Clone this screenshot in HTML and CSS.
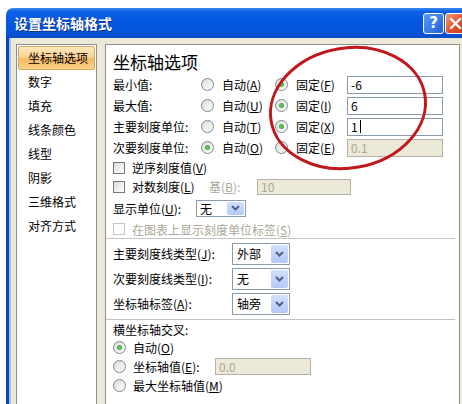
FILE: index.html
```html
<!DOCTYPE html>
<html lang="zh-CN">
<head>
    <meta charset="UTF-8">
    <meta name="viewport" content="width=device-width, initial-scale=1.0">
    <title>设置坐标轴格式</title>
    <link rel="stylesheet" href="styles.css">
</head>
<body>
    <div class="window">
        <div class="titlebar">
            <span class="title">设置坐标轴格式</span>
            <span class="tb-btn help">?</span>
            <span class="tb-btn close">
                <svg width="13" height="13" viewBox="0 0 13 13"><path d="M2 2 L11 11 M11 2 L2 11" stroke="#fff" stroke-width="2.4" stroke-linecap="round"/></svg>
            </span>
        </div>

        <div class="frame">
            <!-- category list on the left -->
            <ul class="nav">
                <li class="active">坐标轴选项</li>
                <li>数字</li>
                <li>填充</li>
                <li>线条颜色</li>
                <li>线型</li>
                <li>阴影</li>
                <li>三维格式</li>
                <li>对齐方式</li>
            </ul>

            <div class="panel">
                <h2>坐标轴选项</h2>

                <div class="bounds">
                    <span>最小值:</span>
                    <span class="opt"><i class="radio"></i>自动(<u>A</u>)</span>
                    <span class="opt"><i class="radio on"></i>固定(<u>F</u>)</span>
                    <span class="field">-6</span>

                    <span>最大值:</span>
                    <span class="opt"><i class="radio"></i>自动(<u>U</u>)</span>
                    <span class="opt"><i class="radio on"></i>固定(<u>I</u>)</span>
                    <span class="field">6</span>

                    <span>主要刻度单位:</span>
                    <span class="opt"><i class="radio"></i>自动(<u>T</u>)</span>
                    <span class="opt"><i class="radio on"></i>固定(<u>X</u>)</span>
                    <span class="field">1<i class="caret"></i></span>

                    <span>次要刻度单位:</span>
                    <span class="opt"><i class="radio on"></i>自动(<u>O</u>)</span>
                    <span class="opt"><i class="radio"></i>固定(<u>E</u>)</span>
                    <span class="field disabled">0.1</span>
                </div>

                <div class="line h19"><i class="check"></i>逆序刻度值(<u>V</u>)</div>
                <div class="line h19">
                    <i class="check"></i><span class="w77">对数刻度(<u>L</u>)</span>
                    <span class="w48 muted">基(<u>B</u>):</span>
                    <span class="field disabled log-base">10</span>
                </div>
                <div class="line h24">
                    <span class="w83">显示单位(<u>U</u>):</span>
                    <span class="select small"><span>无</span><b><svg width="9" height="6" viewBox="0 0 9 6"><path d="M1 1 L4.5 4.5 L8 1" fill="none" stroke="#4d6185" stroke-width="2"/></svg></b></span>
                </div>
                <div class="line h18 muted"><i class="check off"></i>在图表上显示刻度单位标签(<u>S</u>)</div>

                <div class="sep"></div>

                <div class="ticks">
                    <div class="line h25">
                        <span class="w119">主要刻度线类型(<u>J</u>):</span>
                        <span class="select"><span>外部</span><b><svg width="9" height="6" viewBox="0 0 9 6"><path d="M1 1 L4.5 4.5 L8 1" fill="none" stroke="#4d6185" stroke-width="2"/></svg></b></span>
                    </div>
                    <div class="line h25">
                        <span class="w119">次要刻度线类型(<u>I</u>):</span>
                        <span class="select"><span>无</span><b><svg width="9" height="6" viewBox="0 0 9 6"><path d="M1 1 L4.5 4.5 L8 1" fill="none" stroke="#4d6185" stroke-width="2"/></svg></b></span>
                    </div>
                    <div class="line h25">
                        <span class="w119">坐标轴标签(<u>A</u>):</span>
                        <span class="select"><span>轴旁</span><b><svg width="9" height="6" viewBox="0 0 9 6"><path d="M1 1 L4.5 4.5 L8 1" fill="none" stroke="#4d6185" stroke-width="2"/></svg></b></span>
                    </div>
                </div>

                <div class="sep sep-low"></div>

                <div class="line h18">横坐标轴交叉:</div>
                <div class="line h19"><i class="radio on"></i>自动(<u>O</u>)</div>
                <div class="line h19">
                    <i class="radio"></i><span class="w82">坐标轴值(<u>E</u>):</span>
                    <span class="field disabled cross-val">0.0</span>
                </div>
                <div class="line h19"><i class="radio"></i>最大坐标轴值(<u>M</u>)</div>
            </div>
        </div>
    </div>

    <!-- hand-drawn red ring around the fixed values -->
    <svg class="ring" width="462" height="404" viewBox="0 0 462 404">
        <ellipse cx="348" cy="108" rx="78" ry="60" transform="rotate(-10 348 108)" fill="none" stroke="#c2161d" stroke-width="3"/>
    </svg>
</body>
</html>
```

FILE: styles.css
```css
* {
    box-sizing: border-box;
}
body {
    margin: 0;
    height: 404px;
    overflow: hidden;
    position: relative;
    background: #fff;
    font-family: "Noto Sans CJK SC", "Noto Sans", sans-serif;
    font-size: 12px;
    color: #000;
}
u {
    text-decoration: underline;
}
.window {
    margin: 8px 0 0 6px;
    width: 466px;
    height: 400px;
    display: flex;
    flex-direction: column;
}

/* XP style caption */
.titlebar {
    flex: none;
    height: 30px;
    display: flex;
    align-items: center;
    padding: 0 6px 0 8px;
    border-radius: 7px 7px 0 0;
    background: linear-gradient(#3a88f4 0, #0c61e4 12%, #0457e0 45%, #0555dc 80%, #0a4cc4 100%);
}
.title {
    flex: 1;
    color: #fff;
    font-size: 14px;
    font-weight: bold;
    text-shadow: 1px 1px #0b2f8a;
}
.tb-btn {
    width: 21px;
    height: 21px;
    border: 1px solid #fff;
    border-radius: 3px;
    display: flex;
    align-items: center;
    justify-content: center;
    color: #fff;
}
.help {
    background: linear-gradient(135deg, #5a9cf8, #1f5fdc);
    font: bold 15px "DejaVu Sans", sans-serif;
}
.close {
    margin-left: 1px;
    background: linear-gradient(135deg, #f29a76, #e0522a 55%, #c8401d);
}

.frame {
    flex: 1;
    display: flex;
    align-items: stretch;
    background: #ece9d8;
    border-left: 3px solid #0a3fc0;
    box-shadow: inset 2px 0 #a9c3ee;
    padding: 6px 0 0 7px;
}

.nav {
    width: 81px;
    margin: 0 8px 0 0;
    padding: 1px;
    list-style: none;
    background: #fff;
    border: 1px solid #8e8e8e;
    border-bottom: none;
}
.nav li {
    height: 24px;
    line-height: 22px;
    padding-left: 9px;
    border: 1px solid transparent;
    border-radius: 2px;
}
.nav li.active {
    border-color: #d3a869;
    background: linear-gradient(#fde8bb 0, #fbd394 45%, #f7b863 55%, #fbd28a 100%);
}

.panel {
    width: 355px;
    background: #fff;
    border: 1px solid #8e8e8e;
    border-bottom: none;
    padding: 6px 0 0 7px;
}
.panel h2 {
    margin: 0 0 1px;
    height: 22px;
    font-size: 17px;
    font-weight: normal;
    line-height: 22px;
}

.bounds {
    display: grid;
    grid-template-columns: 88px 74px 72px 96px;
    grid-auto-rows: 21px;
    align-items: center;
    white-space: nowrap;
}
.opt {
    display: flex;
    align-items: center;
}

.radio {
    flex: none;
    position: relative;
    width: 13px;
    height: 13px;
    margin-right: 8px;
    border: 1px solid #7b8794;
    border-radius: 50%;
    background: linear-gradient(135deg, #dcdcd6, #fff);
}
.line .radio {
    margin-right: 7px;
}
.radio.on::after {
    content: "";
    position: absolute;
    left: 3px;
    top: 3px;
    width: 5px;
    height: 5px;
    border-radius: 50%;
    background: radial-gradient(#6ccf6c, #2a9a2a);
}

.check {
    flex: none;
    width: 12px;
    height: 12px;
    margin-right: 7px;
    border: 1px solid #6f7a86;
    background: linear-gradient(135deg, #dcdcd6, #fff);
}
.check.off {
    border-color: #c9c7ba;
    background: #fff;
}

.field {
    display: flex;
    align-items: center;
    height: 18px;
    padding-left: 3px;
    border: 1px solid #8a9bb0;
    background: #fff;
}
.field.disabled {
    background: #ece9d8;
    border-color: #b5b3a6;
    color: #aca899;
}
.caret {
    width: 1px;
    height: 13px;
    margin-left: 2px;
    background: #000;
}
.log-base {
    width: 94px;
    height: 16px;
}
.cross-val {
    width: 96px;
    height: 17px;
}

.line {
    display: flex;
    align-items: center;
    white-space: nowrap;
}
.h18 { height: 18px; }
.h19 { height: 19px; }
.h24 { height: 24px; }
.h25 { height: 25px; }
.w48 { width: 48px; }
.w77 { width: 77px; }
.w82 { width: 82px; }
.w83 { width: 83px; }
.w119 { width: 119px; }
.muted {
    color: #aca899;
}

.sep {
    height: 1px;
    margin: 0 4px 0 -7px;
    background: #c4c4c4;
}
.sep-low {
    margin-top: 3px;
}
.ticks {
    margin-top: 2px;
}

.select {
    display: flex;
    width: 58px;
    height: 22px;
    border: 1px solid #8a9bb0;
    background: #fff;
}
.select span {
    flex: 1;
    padding-left: 4px;
    line-height: 20px;
}
.select b {
    width: 17px;
    margin: 1px 1px 1px 0;
    display: flex;
    align-items: center;
    justify-content: center;
    border-radius: 2px;
    background: linear-gradient(#d2e0fd, #b3c9f7);
}
.select.small {
    width: 50px;
    height: 17px;
}
.select.small span {
    padding-left: 3px;
    line-height: 15px;
}

.ring {
    position: absolute;
    left: 0;
    top: 0;
    pointer-events: none;
}
```
